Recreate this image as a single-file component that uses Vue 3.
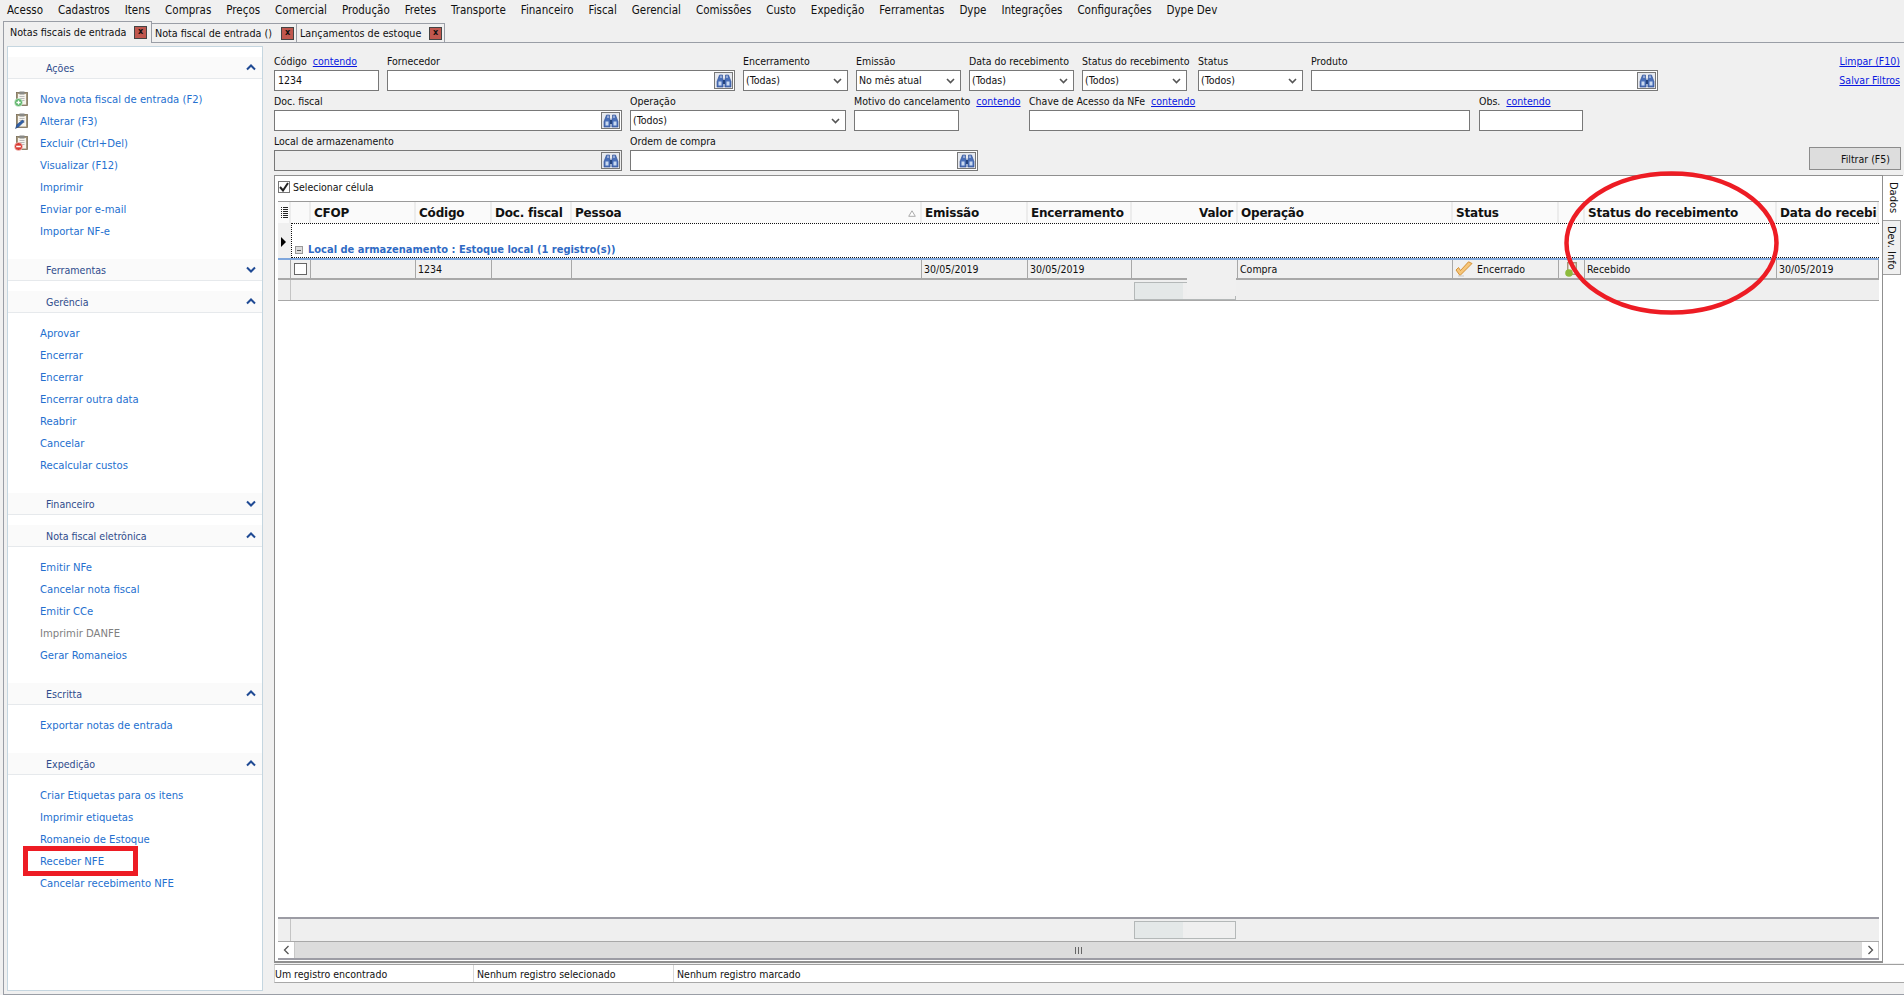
<template>
  <div class="app">
    <div class="menu">
      <span v-for="m in menuItems" :key="m">{{ m }}</span>
    </div>

    <div class="tabs">
      <div v-for="(t, i) in tabs" :key="t.label" class="tab" :class="{ active: i === 0 }" :style="{ width: t.w + 'px' }">
        <span class="tab-label">{{ t.label }}</span>
        <span class="tab-close">x</span>
      </div>
    </div>

    <div class="frame">
      <!-- Sidebar -->
      <aside class="sidebar">
        <section v-for="s in sections" :key="s.title" class="side-section" :class="{ closed: !s.items.length }">
          <header class="side-head">
            <span>{{ s.title }}</span>
            <svg class="chev" width="10" height="7" viewBox="0 0 10 7">
              <path :d="s.items.length ? 'M1 5.5 5 1.5 9 5.5' : 'M1 1.5 5 5.5 9 1.5'" fill="none" stroke="#1f4a94" stroke-width="2" />
            </svg>
          </header>
          <ul v-if="s.items.length" class="side-items">
            <li v-for="it in s.items" :key="it.label" :class="{ off: it.off }">
              <svg v-if="it.icon" class="clip" width="15" height="16" viewBox="0 0 15 16">
                <rect x="2.5" y="1.5" width="11" height="13" fill="#a5977c" stroke="#7b6e58" stroke-width=".8" />
                <rect x="4" y="3" width="8" height="10.5" fill="#f6f4ee" />
                <rect x="5.5" y="0.5" width="5" height="3" fill="#8a8a86" />
                <path d="M5.5 5.5h5M5.5 7.5h5M5.5 9.5h5" stroke="#a9a9a9" stroke-width=".8" />
                <template v-if="it.icon === 'add'">
                  <circle cx="4.5" cy="11.5" r="4" fill="#5db56a" stroke="#e4f2e4" stroke-width=".7" />
                  <path d="M2.4 11.5h4.2M4.5 9.4v4.2" stroke="#fff" stroke-width="1.3" />
                </template>
                <path v-else-if="it.icon === 'edit'" d="M1.5 15.5 3 11.5 8.5 7l1.6 1.6L5 13.6Z" fill="#2e5fa8" stroke="#1d3f78" stroke-width=".5" />
                <template v-else>
                  <circle cx="4.5" cy="11.5" r="4" fill="#d93a32" stroke="#f3d5d2" stroke-width=".7" />
                  <path d="M2.2 11.5h4.6" stroke="#fff" stroke-width="1.6" />
                </template>
              </svg>
              {{ it.label }}
            </li>
          </ul>
        </section>
      </aside>

      <!-- Main -->
      <main class="main">
        <div class="filters">
          <div class="field-rows">
            <div v-for="(row, r) in fieldRows" :key="r" class="field-row">
              <div v-for="f in row" :key="f.label" class="field" :style="{ width: f.w + 'px', marginRight: (f.gap ?? 8) + 'px' }">
                <div class="field-label">
                  <span>{{ f.label }}</span>
                  <a v-if="f.link">contendo</a>
                </div>
                <div class="box" :class="{ disabled: f.disabled, 'is-select': f.type === 'select' }">
                  <span class="box-text">{{ f.value }}</span>
                  <svg v-if="f.type === 'select'" class="caret" width="9" height="6" viewBox="0 0 9 6">
                    <path d="M1 1 4.5 4.5 8 1" fill="none" stroke="#555" stroke-width="1.6" />
                  </svg>
                  <span v-if="f.type === 'search'" class="binoc">
                    <svg width="16" height="14" viewBox="0 0 16 14">
                      <path d="M3.5 1h3v3l.6 1v8H1V7.5Z" fill="#4a6fb8" stroke="#2f4f92" stroke-width=".6" />
                      <path d="M12.5 1h-3v3l-.6 1v8H15V7.5Z" fill="#4a6fb8" stroke="#2f4f92" stroke-width=".6" />
                      <path d="M7 6h2v4H7Z" fill="#25447e" />
                      <path d="M2.5 7.5h3v4h-3ZM10.5 7.5h3v4h-3Z" fill="#c9d9f0" />
                      <path d="M4.5 1.5h1v2.5h-1ZM10.5 1.5h1v2.5h-1Z" fill="#dbe6f5" />
                    </svg>
                  </span>
                </div>
              </div>
            </div>
          </div>
          <div class="filter-actions">
            <a>Limpar (F10)</a>
            <a>Salvar Filtros</a>
            <button class="filter-btn">Filtrar (F5)</button>
          </div>
        </div>

        <div class="grid-wrap">
          <div class="grid-panel">
            <label class="select-cell">
              <span class="checked">
                <svg width="10" height="10" viewBox="0 0 10 10"><path d="M1 5 4 8.5 9 1" fill="none" stroke="#222" stroke-width="2" /></svg>
              </span>
              Selecionar célula
            </label>

            <div class="table">
              <div class="cols thead">
                <div class="th ind">
                  <svg width="7" height="11" viewBox="0 0 7 11"><path d="M0 .5h1M0 2.5h1M0 4.5h1M0 6.5h1M0 8.5h1M0 10.5h1M2 .5h5M2 2.5h5M2 4.5h5M2 6.5h5M2 8.5h5M2 10.5h5" stroke="#222" /></svg>
                </div>
                <div class="th"></div>
                <div v-for="c in columns" :key="c.label" class="th" :class="{ right: c.right, sort: c.sort }">
                  {{ c.label }}
                  <svg v-if="c.sort" class="sort-mark" width="8" height="7" viewBox="0 0 8 7"><path d="M4 .8 7.3 6.3H.7Z" fill="#fff" stroke="#aaa" /></svg>
                </div>
              </div>

              <div class="group">
                <div class="group-ind"><i class="arrow"></i></div>
                <div class="group-body">
                  <span class="expander"></span>
                  Local de armazenamento : Estoque local (1 registro(s))
                </div>
              </div>

              <div class="cols trow">
                <div class="td ind"></div>
                <div class="td"><span class="row-check"></span></div>
                <div class="td"></div>
                <div class="td">1234</div>
                <div class="td"></div>
                <div class="td"></div>
                <div class="td">30/05/2019</div>
                <div class="td">30/05/2019</div>
                <div class="td"></div>
                <div class="td">Compra</div>
                <div class="td status">
                  <svg width="18" height="16" viewBox="0 0 18 16">
                    <path d="M1 9 5 14.5 17 2.5 13.5 .8 5.5 9.5 3.5 6.5Z" fill="#f6c67a" stroke="#d0892a" stroke-width=".9" />
                    <path d="M3 15h6" stroke="#c9c9c9" stroke-width="1" />
                  </svg>
                  Encerrado
                </div>
                <div class="td icon-cell">
                  <svg width="15" height="16" viewBox="0 0 15 16">
                    <rect x="3" y="1" width="10" height="13" fill="#a5977c" />
                    <rect x="4.5" y="2.5" width="7" height="10" fill="#f6f4ee" />
                    <circle cx="5" cy="12" r="3.8" fill="#8dbb3c" />
                  </svg>
                </div>
                <div class="td">Recebido</div>
                <div class="td">30/05/2019</div>
              </div>

              <div class="cols summary first">
                <div class="ind"></div>
                <div class="sum-span"></div>
                <div class="sum-box"><b></b></div>
              </div>

              <div class="table-space"></div>

              <div class="cols summary last">
                <div class="ind"></div>
                <div class="sum-span"></div>
                <div class="sum-box"><b></b></div>
              </div>

              <div class="hscroll">
                <span class="sb-btn">
                  <svg width="7" height="10" viewBox="0 0 7 10"><path d="M5.5 1 1.5 5 5.5 9" fill="none" stroke="#555" stroke-width="1.3" /></svg>
                </span>
                <span class="sb-thumb">
                  <svg width="8" height="7" viewBox="0 0 8 7"><path d="M.5 0v7M3.5 0v7M6.5 0v7" stroke="#666" /></svg>
                </span>
                <span class="sb-btn">
                  <svg width="7" height="10" viewBox="0 0 7 10"><path d="M1.5 1 5.5 5 1.5 9" fill="none" stroke="#555" stroke-width="1.3" /></svg>
                </span>
              </div>
            </div>
          </div>

          <div class="side-tabs">
            <div class="vtab on">Dados</div>
            <div class="vtab">Dev. Info</div>
          </div>
        </div>

        <div class="statusbar">
          <span>Um registro encontrado</span>
          <span>Nenhum registro selecionado</span>
          <span>Nenhum registro marcado</span>
        </div>
      </main>
    </div>

    <!-- Marcacoes feitas sobre a captura -->
    <div class="patch"></div>
    <div class="mark-rect"></div>
    <svg class="mark-ellipse" width="220" height="148" viewBox="0 0 220 148">
      <ellipse cx="108.5" cy="74" rx="105" ry="69.5" fill="none" stroke="#ed1c24" stroke-width="4.5" />
    </svg>
  </div>
</template>

<script setup>
const menuItems = [
  'Acesso', 'Cadastros', 'Itens', 'Compras', 'Preços', 'Comercial', 'Produção', 'Fretes', 'Transporte', 'Financeiro',
  'Fiscal', 'Gerencial', 'Comissões', 'Custo', 'Expedição', 'Ferramentas', 'Dype', 'Integrações', 'Configurações', 'Dype Dev'
];

const tabs = [
  { label: 'Notas fiscais de entrada', w: 149 },
  { label: 'Nota fiscal de entrada ()', w: 145 },
  { label: 'Lançamentos de estoque', w: 148 }
];

const link = (label) => ({ label });

const sections = [
  {
    title: 'Ações',
    items: [
      { label: 'Nova nota fiscal de entrada (F2)', icon: 'add' },
      { label: 'Alterar (F3)', icon: 'edit' },
      { label: 'Excluir (Ctrl+Del)', icon: 'del' },
      link('Visualizar (F12)'),
      link('Imprimir'),
      link('Enviar por e-mail'),
      link('Importar NF-e')
    ]
  },
  { title: 'Ferramentas', items: [] },
  {
    title: 'Gerência',
    items: ['Aprovar', 'Encerrar', 'Encerrar ', 'Encerrar outra data', 'Reabrir', 'Cancelar', 'Recalcular custos'].map(link)
  },
  { title: 'Financeiro', items: [] },
  {
    title: 'Nota fiscal eletrônica',
    items: [
      link('Emitir NFe'),
      link('Cancelar nota fiscal'),
      link('Emitir CCe'),
      { label: 'Imprimir DANFE', off: true },
      link('Gerar Romaneios')
    ]
  },
  { title: 'Escritta', items: [link('Exportar notas de entrada')] },
  {
    title: 'Expedição',
    items: ['Criar Etiquetas para os itens', 'Imprimir etiquetas', 'Romaneio de Estoque', 'Receber NFE', 'Cancelar recebimento NFE'].map(link)
  }
];

const fieldRows = [
  [
    { label: 'Código', link: true, w: 105, value: '1234' },
    { label: 'Fornecedor', w: 348, type: 'search' },
    { label: 'Encerramento', w: 105, type: 'select', value: '(Todas)' },
    { label: 'Emissão', w: 105, type: 'select', value: 'No mês atual' },
    { label: 'Data do recebimento', w: 105, type: 'select', value: '(Todas)' },
    { label: 'Status do recebimento', w: 105, gap: 11, type: 'select', value: '(Todos)' },
    { label: 'Status', w: 105, type: 'select', value: '(Todos)' },
    { label: 'Produto', w: 347, type: 'search' }
  ],
  [
    { label: 'Doc. fiscal', w: 348, type: 'search' },
    { label: 'Operação', w: 216, type: 'select', value: '(Todos)' },
    { label: 'Motivo do cancelamento', link: true, w: 105, gap: 70 },
    { label: 'Chave de Acesso da NFe', link: true, w: 441, gap: 9 },
    { label: 'Obs.', link: true, w: 104 }
  ],
  [
    { label: 'Local de armazenamento', w: 348, type: 'search', disabled: true },
    { label: 'Ordem de compra', w: 348, type: 'search' }
  ]
];

const columns = [
  { label: 'CFOP' },
  { label: 'Código' },
  { label: 'Doc. fiscal' },
  { label: 'Pessoa', sort: true },
  { label: 'Emissão' },
  { label: 'Encerramento' },
  { label: 'Valor', right: true },
  { label: 'Operação' },
  { label: 'Status' },
  { label: '' },
  { label: 'Status do recebimento' },
  { label: 'Data do recebimento' }
];
</script>

<style>
html,
body {
  margin: 0;
  overflow: hidden;
}
</style>

<style scoped>
.app {
  position: relative;
  width: 1904px;
  height: 995px;
  overflow: hidden;
  background: #f0f0f0;
  color: #111;
  font-family: "DejaVu Sans", sans-serif;
  font-stretch: condensed;
  font-size: 10.5px;
  display: flex;
  flex-direction: column;
}

/* Menu */
.menu {
  height: 22px;
  flex: none;
  display: flex;
  align-items: center;
  gap: 15px;
  padding: 0 0 2px 7px;
  box-sizing: border-box;
  font-size: 11.5px;
  white-space: nowrap;
}

/* Tabs */
.tabs {
  height: 20px;
  flex: none;
  display: flex;
  align-items: flex-end;
  padding-left: 3px;
  position: relative;
  z-index: 1;
}

.tab {
  height: 19px;
  box-sizing: border-box;
  border: 1px solid #9a9ea6;
  border-left-width: 0;
  border-bottom: 0;
  display: flex;
  align-items: center;
  justify-content: space-between;
  padding: 0 2px 0 3px;
  white-space: nowrap;
  font-size: 10.7px;
}

.tab.active {
  height: 22px;
  border-left-width: 1px;
  padding: 0 4px 1px 6px;
  margin-bottom: -1px;
  background: #f0f0f0;
}

.tab-close {
  width: 13px;
  height: 13px;
  box-sizing: border-box;
  background: #c0574e;
  border: 1px solid #444;
  font-size: 9px;
  font-weight: bold;
  line-height: 9px;
  text-align: center;
  color: #111;
}

/* Frame */
.frame {
  flex: none;
  height: 953px;
  box-sizing: border-box;
  border-top: 1px solid #9a9ea6;
  border-left: 1px solid #9a9ea6;
  border-bottom: 1px solid #9a9ea6;
  margin-left: 3px;
  padding: 3px 0 3px 3px;
  display: flex;
}

/* Sidebar */
.sidebar {
  width: 256px;
  flex: none;
  box-sizing: border-box;
  background: #fff;
  border: 1px solid #c5d6e0;
  padding-top: 10px;
}

.side-section {
  padding-bottom: 17px;
}

.side-section.closed {
  padding-bottom: 10px;
}

.side-head {
  height: 22px;
  box-sizing: border-box;
  background: #fafafa;
  border-bottom: 1px solid #e6e9ec;
  padding: 0 6px 0 38px;
  display: flex;
  align-items: center;
  justify-content: space-between;
  color: #2f4c8c;
  font-size: 10.6px;
}

.side-items {
  list-style: none;
  margin: 0;
  padding: 9px 0 0 32px;
}

.side-items li {
  position: relative;
  height: 22px;
  line-height: 23px;
  color: #2470cf;
  font-size: 11.2px;
  white-space: nowrap;
}

.side-items li.off {
  color: #808080;
}

.clip {
  position: absolute;
  left: -26px;
  top: 3px;
}

/* Main */
.main {
  flex: 1;
  min-width: 0;
  margin-left: 11px;
  display: flex;
  flex-direction: column;
  padding-top: 6px;
}

.filters {
  height: 123px;
  flex: none;
  display: flex;
  justify-content: space-between;
}

.field-row {
  display: flex;
  height: 40px;
}

.field-label {
  height: 18px;
  line-height: 19px;
  white-space: nowrap;
  display: flex;
  gap: 6px;
}

.field-label a,
.filter-actions a {
  color: #0a18e0;
  text-decoration: underline;
}

.box {
  position: relative;
  height: 21px;
  box-sizing: border-box;
  border: 1px solid #787878;
  background: #fff;
  display: flex;
  align-items: center;
  padding: 0 0 2px 3px;
}

.box.is-select {
  padding-left: 2px;
}

.box.disabled {
  background: #eee;
}

.caret {
  position: absolute;
  right: 5px;
  top: 7px;
}

.binoc {
  position: absolute;
  right: 1px;
  top: 1px;
  width: 19px;
  height: 17px;
  box-sizing: border-box;
  border: 1px solid #777;
  background: #e6e9ef;
  display: flex;
  align-items: center;
  justify-content: center;
}

.filter-actions {
  display: flex;
  flex-direction: column;
  align-items: flex-end;
  padding: 0 3px 5px 0;
}

.filter-actions a {
  height: 19px;
  line-height: 19px;
  margin-right: 1px;
}

.filter-btn {
  margin-top: auto;
  width: 92px;
  height: 23px;
  box-sizing: border-box;
  border: 1px solid #8c8c8c;
  background: #ddd;
  font: inherit;
  color: #111;
  text-align: right;
  padding: 0 10px 0 0;
}

/* Grid */
.grid-wrap {
  height: 788px;
  flex: none;
  display: flex;
  background: #fff;
}

.grid-panel {
  width: 1609px;
  flex: none;
  box-sizing: border-box;
  border: 1px solid #8f8f8f;
  border-width: 1px 1px 2px;
  background: #fff;
  padding: 0 3px 1px 3px;
  display: flex;
  flex-direction: column;
}

.select-cell {
  height: 25px;
  box-sizing: border-box;
  padding-bottom: 3px;
  flex: none;
  display: flex;
  align-items: center;
  gap: 3px;
}

.checked {
  width: 12px;
  height: 12px;
  box-sizing: border-box;
  border: 1px solid #777;
  display: flex;
  align-items: center;
  justify-content: center;
}

.table {
  flex: 1;
  min-height: 0;
  display: flex;
  flex-direction: column;
  border-top: 1px solid #9a9a9a;
}

.cols {
  display: grid;
  grid-template-columns: 13px 20px 105px 76px 80px 350px 106px 104px 106px 215px 106px 26px 192px 1fr;
}

.thead {
  height: 21px;
  flex: none;
  background: #fafafa;
  overflow: hidden;
}

.th {
  position: relative;
  display: flex;
  align-items: center;
  padding: 1px 0 0 3px;
  font-size: 12px;
  font-weight: bold;
  font-stretch: normal;
  letter-spacing: -0.2px;
  color: #111;
  white-space: nowrap;
  border-right: 2px solid #ececec;
  box-sizing: border-box;
  min-width: 0;
  overflow: hidden;
}

.th.ind {
  padding: 0 0 0 3px;
}

.th.right {
  justify-content: flex-end;
  padding-right: 3px;
}

.sort-mark {
  position: absolute;
  right: 4px;
  top: 8px;
}

.group {
  height: 37px;
  flex: none;
  box-sizing: border-box;
  display: flex;
  border-bottom: 2px solid #7ea6dc;
}

.group-ind {
  width: 13px;
  background: #f0f0f0;
  border-right: 0;
  display: flex;
  align-items: center;
  padding-left: 3px;
  box-sizing: border-box;
}

.arrow {
  display: block;
  width: 0;
  height: 0;
  border-left: 5px solid #000;
  border-top: 5px solid transparent;
  border-bottom: 5px solid transparent;
  margin-top: 2px;
}

.group-body {
  flex: 1;
  box-sizing: border-box;
  border-top: 1px dotted #111;
  border-bottom: 1px dotted #111;
  border-left: 1px dotted #111;
  display: flex;
  align-items: flex-end;
  gap: 5px;
  padding-left: 3px;
  color: #2f6ac4;
  font-weight: bold;
  font-size: 11px;
  line-height: 14px;
}

.expander {
  width: 8px;
  height: 8px;
  margin-bottom: 3px;
  background:
    linear-gradient(#555, #555) center / 4px 1px no-repeat,
    #ddd;
  border: 1px solid #999;
  box-sizing: border-box;
}

.trow {
  height: 20px;
  flex: none;
  background: #f0f0f0;
  border-bottom: 2px solid #a8a8a8;
  box-sizing: border-box;
}

.td {
  display: flex;
  align-items: center;
  padding-left: 2px;
  border-right: 1px solid #a8a8a8;
  box-sizing: border-box;
  white-space: nowrap;
  min-width: 0;
}

.td.ind {
  padding: 0;
}

.td.status {
  gap: 4px;
}

.row-check {
  width: 13px;
  height: 12px;
  margin-left: 1px;
  box-sizing: border-box;
  border: 1px solid #666;
  background: #fff;
}

.icon-cell {
  padding-left: 5px;
}

.summary {
  height: 21px;
  flex: none;
  background: #efefef;
  border-bottom: 1px solid #a8a8a8;
  box-sizing: border-box;
}

.summary .ind {
  border-right: 1px solid #c4c4c4;
}

.sum-span {
  grid-column: 2 / 9;
}

.sum-box {
  grid-column: 9;
  margin: 2px 2px 0 2px;
  height: 18px;
  box-sizing: border-box;
  border: 1px solid #b4b8b8;
  background: #efefef;
}

.sum-box b {
  display: block;
  height: 100%;
  width: 48%;
  background: #e4e8e8;
}

.table-space {
  flex: 1;
  min-height: 0;
  background: #fff;
}

.summary.last {
  height: 24px;
  border-top: 2px solid #9c9ca4;
  border-bottom: 0;
}

.hscroll {
  height: 19px;
  flex: none;
  box-sizing: border-box;
  border-top: 1px solid #a8a8a8;
  border-bottom: 2px solid #9c9ca4;
  background: #dcdcdc;
  display: flex;
}

.sb-btn {
  width: 17px;
  flex: none;
  background: #fff;
  border-right: 1px solid #c8c8c8;
  display: flex;
  align-items: center;
  justify-content: center;
  box-sizing: border-box;
}

.sb-thumb {
  flex: 1;
  display: flex;
  align-items: center;
  justify-content: center;
}

.side-tabs {
  flex: 1;
  background: #fff;
  display: flex;
  flex-direction: column;
  align-items: flex-start;
}

.vtab {
  width: 18px;
  height: 55px;
  box-sizing: border-box;
  border: 1px solid #a0a0a0;
  border-left: 0;
  background: #f0f0f0;
  writing-mode: vertical-rl;
  display: flex;
  align-items: center;
  padding: 5px 1px 0 0;
  font-size: 11px;
}

.vtab.on {
  width: 20px;
  height: 45px;
  background: #fff;
  border-bottom: 0;
  border-right: 0;
  padding: 6px 0 0 1px;
}

/* Status bar */
.statusbar {
  height: 19px;
  flex: none;
  box-sizing: border-box;
  border-top: 1px solid #a0a0a0;
  border-bottom: 1px solid #a8a8a8;
  border-left: 1px solid #d0d0d0;
  background: #fff;
  display: flex;
  align-items: center;
  margin-top: 1px;
}

.statusbar span {
  height: 100%;
  box-sizing: border-box;
  line-height: 18px;
  white-space: nowrap;
  border-right: 1px solid #d8d8d8;
  padding-left: 3px;
  width: 200px;
}

.statusbar span:first-child {
  padding-left: 0;
  width: 199px;
}

.statusbar span:last-child {
  border-right: 0;
}

/* Anotacoes */
.patch {
  position: absolute;
  left: 1187px;
  top: 261px;
  width: 49px;
  height: 35px;
  background: #f0f0f0;
}

.mark-rect {
  position: absolute;
  left: 23px;
  top: 846px;
  width: 115px;
  height: 30px;
  box-sizing: border-box;
  border: 5px solid #ed1c24;
}

.mark-ellipse {
  position: absolute;
  left: 1563px;
  top: 169px;
}
</style>
